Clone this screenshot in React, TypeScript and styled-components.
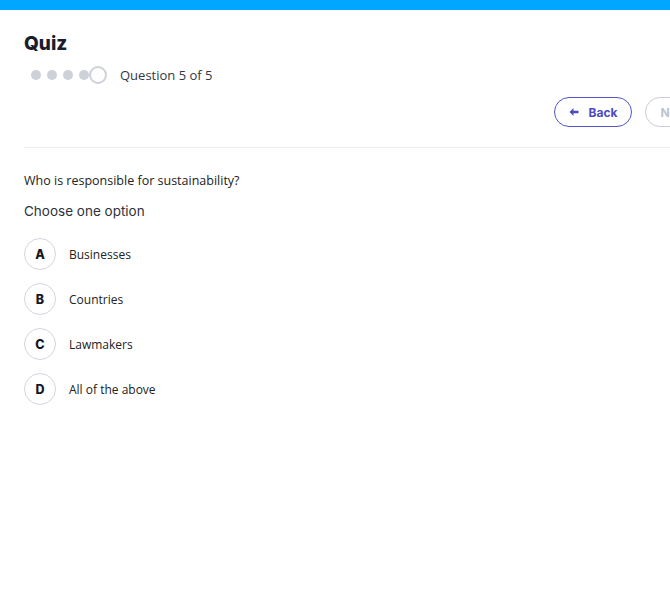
import React from "react";
import styled, { createGlobalStyle } from "styled-components";

const Global = createGlobalStyle`
  html, body { margin: 0; padding: 0; background: #fff; overflow: hidden; }
  body { font-family: "Open Sans", "Noto Sans", sans-serif; color: #222; }
  * { box-sizing: border-box; }
`;

const Page = styled.div`
  width: 746px;
`;

const TopBar = styled.div`
  height: 10px;
  background: #00a6ff;
`;

const Main = styled.main`
  padding: 22px 24px 0;
`;

const Title = styled.h1`
  margin: 0;
  font-family: Inter, "DejaVu Sans", sans-serif;
  font-weight: 800;
  font-size: 19px;
  line-height: 24px;
  color: #1a1d2b;
`;

const Progress = styled.div`
  display: flex;
  align-items: center;
  margin-top: 9px;
  height: 20px;
  padding-left: 7px;
`;

const Dots = styled.div`
  display: flex;
  align-items: center;
  gap: 6px;
`;

const Dot = styled.span<{ $current?: boolean }>`
  display: block;
  width: ${(p) => (p.$current ? "18px" : "10px")};
  height: ${(p) => (p.$current ? "18px" : "10px")};
  border-radius: 50%;
  background: ${(p) => (p.$current ? "#fff" : "#cdd1d9")};
  border: ${(p) => (p.$current ? "2px solid #cdd1d9" : "none")};
  margin-left: ${(p) => (p.$current ? "-6px" : "0")};
`;

const ProgressLabel = styled.span`
  margin-left: 13px;
  font-size: 13px;
  color: #333842;
`;

const Actions = styled.div`
  display: flex;
  justify-content: flex-end;
  gap: 13px;
  margin-top: 12px;
`;

const NavButton = styled.button<{ $disabled?: boolean }>`
  display: inline-flex;
  align-items: center;
  justify-content: center;
  gap: 9px;
  height: 30px;
  padding: 0 14px;
  border-radius: 15px;
  background: #fff;
  border: 1px solid ${(p) => (p.$disabled ? "#c9ced6" : "#5254c9")};
  color: ${(p) => (p.$disabled ? "#bcc3cd" : "#4b4dc2")};
  font-family: Inter, "DejaVu Sans", sans-serif;
  font-weight: 700;
  font-size: 12px;
  cursor: pointer;
`;

const Divider = styled.hr`
  margin: 20px 0 0;
  border: none;
  border-top: 1px solid #ececec;
`;

const Question = styled.p`
  margin: 24px 0 0;
  font-size: 12.5px;
  line-height: 18px;
  color: #222;
`;

const Hint = styled.p`
  margin: 12px 0 0;
  font-family: Inter, "DejaVu Sans", sans-serif;
  font-size: 13.5px;
  line-height: 18px;
  color: #2e323b;
`;

const Options = styled.ul`
  list-style: none;
  margin: 18px 0 0;
  padding: 0;
  display: flex;
  flex-direction: column;
  gap: 13px;
`;

const Option = styled.li`
  display: flex;
  align-items: center;
  gap: 13px;
`;

const Letter = styled.span`
  display: flex;
  align-items: center;
  justify-content: center;
  width: 32px;
  height: 32px;
  border-radius: 50%;
  border: 1px solid #d3d6dd;
  font-family: Inter, "DejaVu Sans", sans-serif;
  font-weight: 800;
  font-size: 12.5px;
  color: #151824;
`;

const OptionText = styled.span`
  font-size: 12px;
  color: #222;
`;

const Arrow = ({ flip }: { flip?: boolean }) => (
  <svg
    width="10"
    height="10"
    viewBox="0 0 10 10"
    aria-hidden
    style={flip ? { transform: "scaleX(-1)" } : undefined}
  >
    <path d="M0.5 5 L4.5 1 L4.5 3.8 L9.5 3.8 L9.5 6.2 L4.5 6.2 L4.5 9 Z" fill="currentColor" />
  </svg>
);

const options = [
  ["A", "Businesses"],
  ["B", "Countries"],
  ["C", "Lawmakers"],
  ["D", "All of the above"],
];

export default function App() {
  return (
    <Page>
      <Global />
      <TopBar />
      <Main>
        <Title>Quiz</Title>
        <Progress>
          <Dots>
            <Dot />
            <Dot />
            <Dot />
            <Dot />
            <Dot $current />
          </Dots>
          <ProgressLabel>Question 5 of 5</ProgressLabel>
        </Progress>
        <Actions>
          <NavButton>
            <Arrow />
            Back
          </NavButton>
          <NavButton $disabled>
            Next
            <Arrow flip />
          </NavButton>
        </Actions>
        <Divider />
        <Question>Who is responsible for sustainability?</Question>
        <Hint>Choose one option</Hint>
        <Options>
          {options.map(([l, t]) => (
            <Option key={l}>
              <Letter>{l}</Letter>
              <OptionText>{t}</OptionText>
            </Option>
          ))}
        </Options>
      </Main>
    </Page>
  );
}
